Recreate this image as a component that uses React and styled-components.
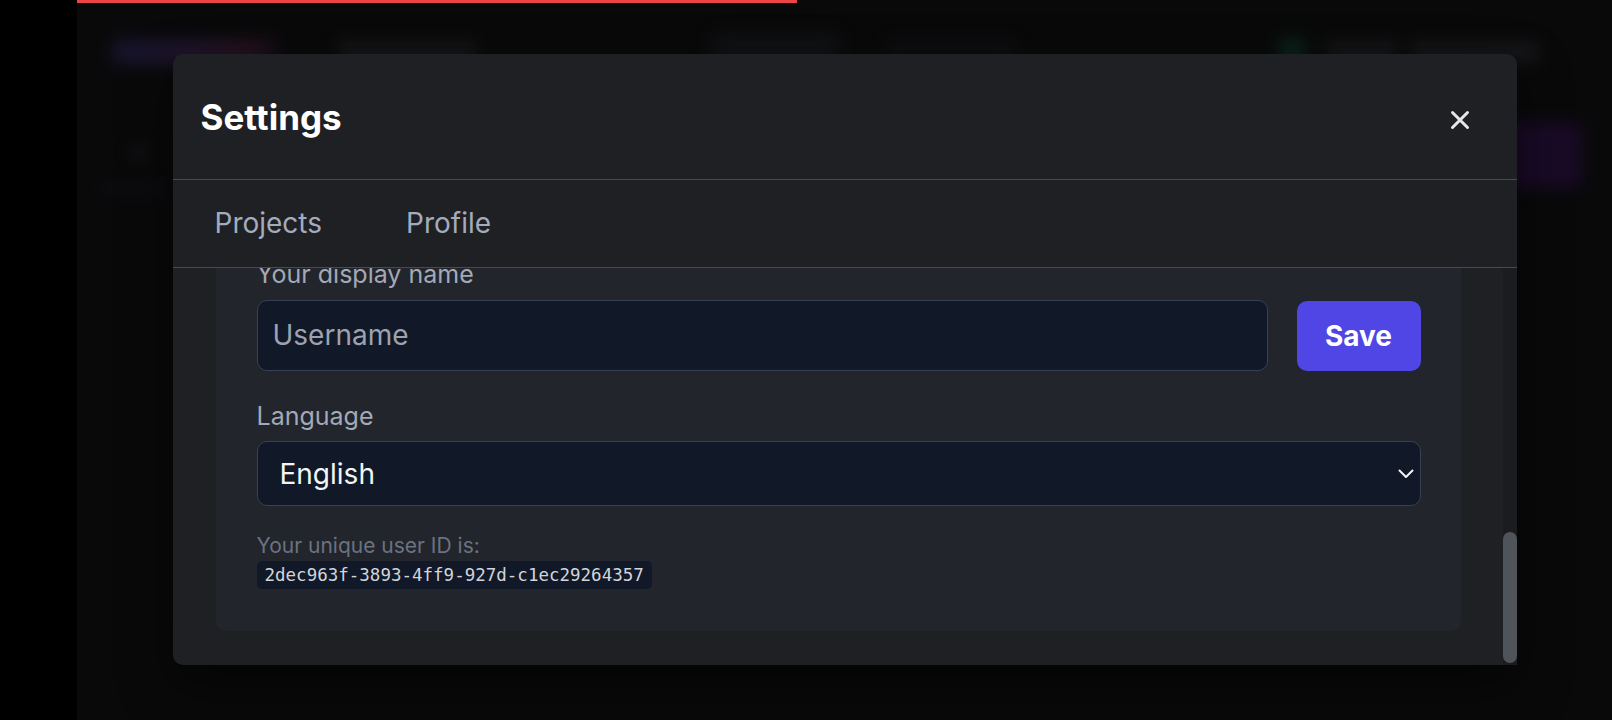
import React, { useLayoutEffect, useRef } from "react";
import styled, { createGlobalStyle } from "styled-components";

const GlobalStyle = createGlobalStyle`
  html, body {
    margin: 0;
    padding: 0;
    background: #000;
  }
  * {
    box-sizing: border-box;
  }
  body {
    font-family: Inter, "Noto Sans", "Liberation Sans", sans-serif;
  }
`;

function App() {
  const viewRef = useRef(null);

  // the dialog is shown scrolled down to the end of the profile form
  useLayoutEffect(() => {
    const el = viewRef.current;
    if (el) el.scrollTop = el.scrollHeight;
  }, []);

  return (
    <Page>
      <GlobalStyle />
      <Gutter />
      <Stage>
        <Behind>
          <NavBar>
            <Logo />
            <NavItem $w={140} $ml={60} />
            <NavPill $w={130} $ml={233} />
            <NavItem $w={133} $ml={45} $dim />
            <Spacer />
            <StatusDot />
            <NavItem $w={72} $ml={18} />
            <NavItem $w={130} $ml={12} />
          </NavBar>
          <SubBar>
            <SubTab>
              <SubDot />
            </SubTab>
            <Spacer />
            <CreateButton />
          </SubBar>
        </Behind>

        <Progress $value={46.9} />

        <Overlay>
          <Modal>
            <Header>
              <Title>Settings</Title>
              <CloseButton aria-label="Close">
                <svg width="20" height="20" viewBox="0 0 20 20" fill="none">
                  <path
                    d="M2.5 2.5L17.5 17.5M17.5 2.5L2.5 17.5"
                    stroke="#e5e7eb"
                    strokeWidth="3"
                    strokeLinecap="round"
                  />
                </svg>
              </CloseButton>
            </Header>

            <Tabs>
              <Tab>Projects</Tab>
              <Tab>Profile</Tab>
            </Tabs>

            <Body>
              <Viewport ref={viewRef}>
                <Card>
                  <Field>
                    <Label>Avatar</Label>
                    <AvatarRow>
                      <Avatar>U</Avatar>
                      <GhostButton>Upload</GhostButton>
                    </AvatarRow>
                  </Field>
                  <Field>
                    <Label>Email</Label>
                    <TextInput placeholder="you@example.com" />
                  </Field>
                  <Field>
                    <Label>Location</Label>
                    <TextInput placeholder="City" />
                  </Field>
                  <Field>
                    <Label>Bio</Label>
                    <TextArea placeholder="Tell us about yourself" />
                  </Field>

                  <Field>
                    <Label>Your display name</Label>
                    <InputRow>
                      <TextInput placeholder="Username" />
                      <SaveButton>Save</SaveButton>
                    </InputRow>
                  </Field>

                  <Field>
                    <Label>Language</Label>
                    <SelectWrap>
                      <Select defaultValue="en">
                        <option value="en">English</option>
                        <option value="de">Deutsch</option>
                        <option value="fr">Français</option>
                      </Select>
                      <Chevron width="16" height="10" viewBox="0 0 16 10" fill="none">
                        <path
                          d="M1.5 1.5L8 8L14.5 1.5"
                          stroke="#f3f4f6"
                          strokeWidth="2"
                          strokeLinecap="round"
                          strokeLinejoin="round"
                        />
                      </Chevron>
                    </SelectWrap>
                  </Field>

                  <UserIdText>Your unique user ID is:</UserIdText>
                  <Code>2dec963f-3893-4ff9-927d-c1ec29264357</Code>
                </Card>
              </Viewport>
              <ScrollTrack>
                <ScrollThumb />
              </ScrollTrack>
            </Body>
          </Modal>
        </Overlay>
      </Stage>
    </Page>
  );
}

export default App;

const Page = styled.div`
  display: flex;
  width: 100%;
  height: 720px;
  background: #000;
`;

const Gutter = styled.div`
  width: 77px;
  flex-shrink: 0;
  background: #000;
`;

const Stage = styled.div`
  position: relative;
  flex: 1;
  overflow: hidden;
  background: #0b0b0c;
`;

/* blurred app behind the dialog */
const Behind = styled.div`
  filter: blur(8px);
  opacity: 0.55;
`;

const NavBar = styled.div`
  display: flex;
  align-items: center;
  height: 50px;
  margin-top: 27px;
  padding: 0 72px 0 35px;
`;

const Spacer = styled.div`
  flex: 1;
`;

const Logo = styled.div`
  width: 165px;
  height: 26px;
  border-radius: 6px;
  background: linear-gradient(90deg, #2b2456 0%, #3a2452 50%, #4a1d3a 80%, #2a1830 100%);
`;

const NavItem = styled.div`
  width: ${(p) => p.$w}px;
  height: 22px;
  margin-left: ${(p) => p.$ml}px;
  border-radius: 6px;
  background: ${(p) => (p.$dim ? "#17181b" : "#26272b")};
`;

const NavPill = styled.div`
  width: ${(p) => p.$w}px;
  height: 40px;
  margin-left: ${(p) => p.$ml}px;
  border-radius: 10px;
  background: #1a1c20;
`;

const StatusDot = styled.div`
  width: 32px;
  height: 32px;
  border-radius: 50%;
  background: #0f3b2d;
`;

const SubBar = styled.div`
  display: flex;
  align-items: center;
  height: 80px;
  margin-top: 38px;
  padding: 0 30px 0 25px;
`;

const SubTab = styled.div`
  width: 72px;
  height: 70px;
  display: flex;
  align-items: center;
  justify-content: center;
  border-bottom: 4px solid #232445;
`;

const SubDot = styled.div`
  width: 14px;
  height: 14px;
  border-radius: 50%;
  background: #2c2d31;
`;

const CreateButton = styled.div`
  width: 110px;
  height: 66px;
  border-radius: 10px;
  background: #2f0e4a;
`;

const Progress = styled.div`
  position: absolute;
  top: 0;
  left: 0;
  height: 3px;
  width: ${(p) => p.$value}%;
  background: #ef4444;
  z-index: 2;
`;

const Overlay = styled.div`
  position: absolute;
  inset: 0;
  display: flex;
  align-items: center;
  justify-content: center;
  background: rgba(0, 0, 0, 0.15);
`;

const Modal = styled.div`
  width: 1344px;
  height: 611px;
  margin-top: -1px;
  display: flex;
  flex-direction: column;
  background: #1f2023;
  border-radius: 10px;
  box-shadow: 0 20px 50px rgba(0, 0, 0, 0.5);
`;

const Header = styled.div`
  height: 126px;
  flex-shrink: 0;
  display: flex;
  align-items: center;
  justify-content: space-between;
  padding: 0 47px 0 28px;
  border-bottom: 1px solid #434b5a;
`;

const Title = styled.h2`
  margin: 0;
  font-size: 35px;
  font-weight: 700;
  color: #fff;
`;

const CloseButton = styled.button`
  display: flex;
  align-items: center;
  justify-content: center;
  width: 20px;
  height: 20px;
  padding: 0;
  margin-top: 6px;
  border: none;
  background: none;
  cursor: pointer;
`;

const Tabs = styled.div`
  height: 88px;
  flex-shrink: 0;
  display: flex;
  border-bottom: 1px solid #434b5a;
`;

const Tab = styled.button`
  display: flex;
  align-items: center;
  padding: 0 42px;
  margin-top: -2px;
  border: none;
  background: none;
  font-family: inherit;
  font-size: 28px;
  color: #a3acbd;
  cursor: pointer;
`;

const Body = styled.div`
  flex: 1;
  min-height: 0;
  display: flex;
`;

const Viewport = styled.div`
  flex: 1;
  min-width: 0;
  overflow: hidden;
  padding: 40px 42px 34px 43px;
`;

const ScrollTrack = styled.div`
  width: 14px;
  flex-shrink: 0;
  display: flex;
  flex-direction: column;
  justify-content: flex-end;
  padding-bottom: 2px;
  background: #1b1c1f;
`;

const ScrollThumb = styled.div`
  height: 131px;
  border-radius: 7px;
  background: #4f535a;
`;

const Card = styled.div`
  display: flex;
  flex-direction: column;
  align-items: stretch;
  padding: 40px 40px 42px 41px;
  background: #22252c;
  border-radius: 10px;
`;

const Field = styled.div`
  display: flex;
  flex-direction: column;
  gap: 9px;
  margin-bottom: 29px;

  &:last-of-type {
    margin-bottom: 0;
  }
`;

const Label = styled.label`
  font-size: 25px;
  line-height: 32px;
  color: #a3a9b5;
`;

const AvatarRow = styled.div`
  display: flex;
  align-items: center;
  gap: 24px;
`;

const Avatar = styled.div`
  width: 96px;
  height: 96px;
  border-radius: 50%;
  display: flex;
  align-items: center;
  justify-content: center;
  background: #374151;
  color: #e5e7eb;
  font-size: 36px;
  font-weight: 600;
`;

const GhostButton = styled.button`
  height: 50px;
  padding: 0 24px;
  border: 1px solid #374151;
  border-radius: 10px;
  background: transparent;
  color: #d1d5db;
  font-family: inherit;
  font-size: 20px;
`;

const InputRow = styled.div`
  display: flex;
  align-items: center;
  gap: 29px;
`;

const TextInput = styled.input`
  flex: 1;
  width: 100%;
  height: 71px;
  padding: 0 15px;
  background: #111827;
  border: 1px solid #374151;
  border-radius: 10px;
  color: #f3f4f6;
  font-family: inherit;
  font-size: 28px;
  outline: none;

  &::placeholder {
    color: #9ca3af;
  }
`;

const TextArea = styled.textarea`
  height: 200px;
  padding: 15px;
  resize: none;
  background: #111827;
  border: 1px solid #374151;
  border-radius: 10px;
  color: #f3f4f6;
  font-family: inherit;
  font-size: 22px;

  &::placeholder {
    color: #9ca3af;
  }
`;

const SaveButton = styled.button`
  width: 124px;
  height: 70px;
  flex-shrink: 0;
  margin-top: 2px;
  border: none;
  border-radius: 10px;
  background: #4f46e5;
  color: #fff;
  font-family: inherit;
  font-size: 28px;
  font-weight: 700;
  cursor: pointer;
`;

const SelectWrap = styled.div`
  position: relative;
`;

const Select = styled.select`
  appearance: none;
  width: 100%;
  height: 65px;
  padding: 0 22px;
  background: #111827;
  border: 1px solid #374151;
  border-radius: 10px;
  color: #f3f4f6;
  font-family: inherit;
  font-size: 28px;
  outline: none;
`;

const Chevron = styled.svg`
  position: absolute;
  right: 7px;
  top: 50%;
  transform: translateY(-50%);
  pointer-events: none;
`;

const UserIdText = styled.p`
  margin: 26px 0 1px;
  font-size: 21px;
  line-height: 28px;
  color: #6b7280;
`;

const Code = styled.code`
  align-self: flex-start;
  padding: 0 8px;
  line-height: 28px;
  background: #111827;
  border-radius: 5px;
  color: #d1d5db;
  font-family: "DejaVu Sans Mono", "Liberation Mono", monospace;
  font-size: 17.5px;
`;
